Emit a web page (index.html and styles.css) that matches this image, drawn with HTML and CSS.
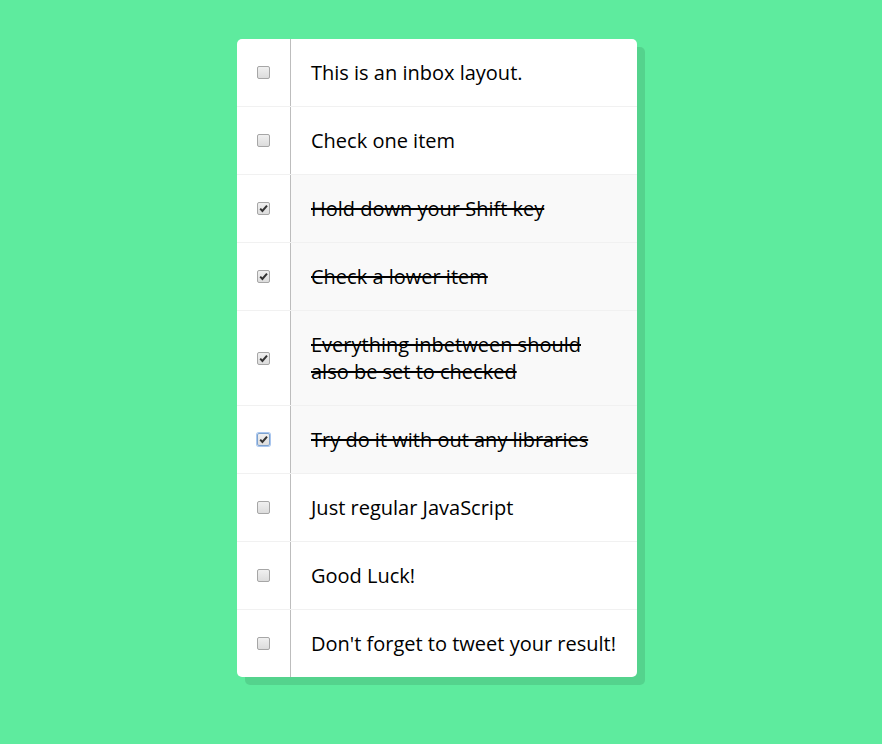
FILE: index.html
```html
<!DOCTYPE html>
<html lang="en">
<head>
<meta charset="utf-8">
<title>Hold Shift to Check Checkboxes</title>
<link rel="stylesheet" href="styles.css">
</head>
<body>
<div class="inbox">
  <div class="item"><input type="checkbox"><p>This is an inbox layout.</p></div>
  <div class="item"><input type="checkbox"><p>Check one item</p></div>
  <div class="item"><input type="checkbox" checked><p>Hold down your Shift key</p></div>
  <div class="item"><input type="checkbox" checked><p>Check a lower item</p></div>
  <div class="item"><input type="checkbox" checked><p>Everything inbetween should also be set to checked</p></div>
  <div class="item"><input type="checkbox" class="focused" checked><p>Try do it with out any libraries</p></div>
  <div class="item"><input type="checkbox"><p>Just regular JavaScript</p></div>
  <div class="item"><input type="checkbox"><p>Good Luck!</p></div>
  <div class="item"><input type="checkbox"><p>Don't forget to tweet your result!</p></div>
</div>
</body>
</html>
```
FILE: styles.css
```css
html {
  background: #5eeb9e;
  font-family: "Open Sans", "Liberation Sans", sans-serif;
}
body {
  margin: 0;
  padding: 39px 8px 39px 0;
}
.inbox {
  max-width: 400px;
  margin: 0 auto;
  background: #fff;
  border-radius: 5px;
  box-shadow: 8px 8px 0 rgba(0, 0, 0, 0.1);
}
.item {
  display: flex;
  align-items: center;
  border-bottom: 1px solid #f1f1f1;
}
.item:last-child {
  border-bottom: 0;
}
.item input {
  appearance: none;
  -webkit-appearance: none;
  flex: none;
  box-sizing: border-box;
  width: 13px;
  height: 13px;
  margin: 20px;
  border: 1px solid #a6a6a6;
  border-radius: 2px;
  background: linear-gradient(#f0f0f0, #dcdcdc);
}
.item input:checked {
  background-image: url("data:image/svg+xml,%3Csvg xmlns='http://www.w3.org/2000/svg' width='11' height='11' viewBox='0 0 11 11'%3E%3Cpath d='M2.2 5.6 L4.4 7.9 L9 2.6' fill='none' stroke='%23333' stroke-width='2'/%3E%3C/svg%3E"), linear-gradient(#f0f0f0, #dcdcdc);
  background-repeat: no-repeat;
}
.item input.focused {
  border-color: #7da2ce;
  box-shadow: 0 0 0 1px #a9c6ef;
}
.item p {
  margin: 0;
  padding: 20px;
  flex: 1;
  font-size: 20px;
  line-height: 27px;
  color: #000;
  border-left: 1px solid #bdbdbd;
}
.item input:checked + p {
  background: #f9f9f9;
  text-decoration: line-through;
}
```
